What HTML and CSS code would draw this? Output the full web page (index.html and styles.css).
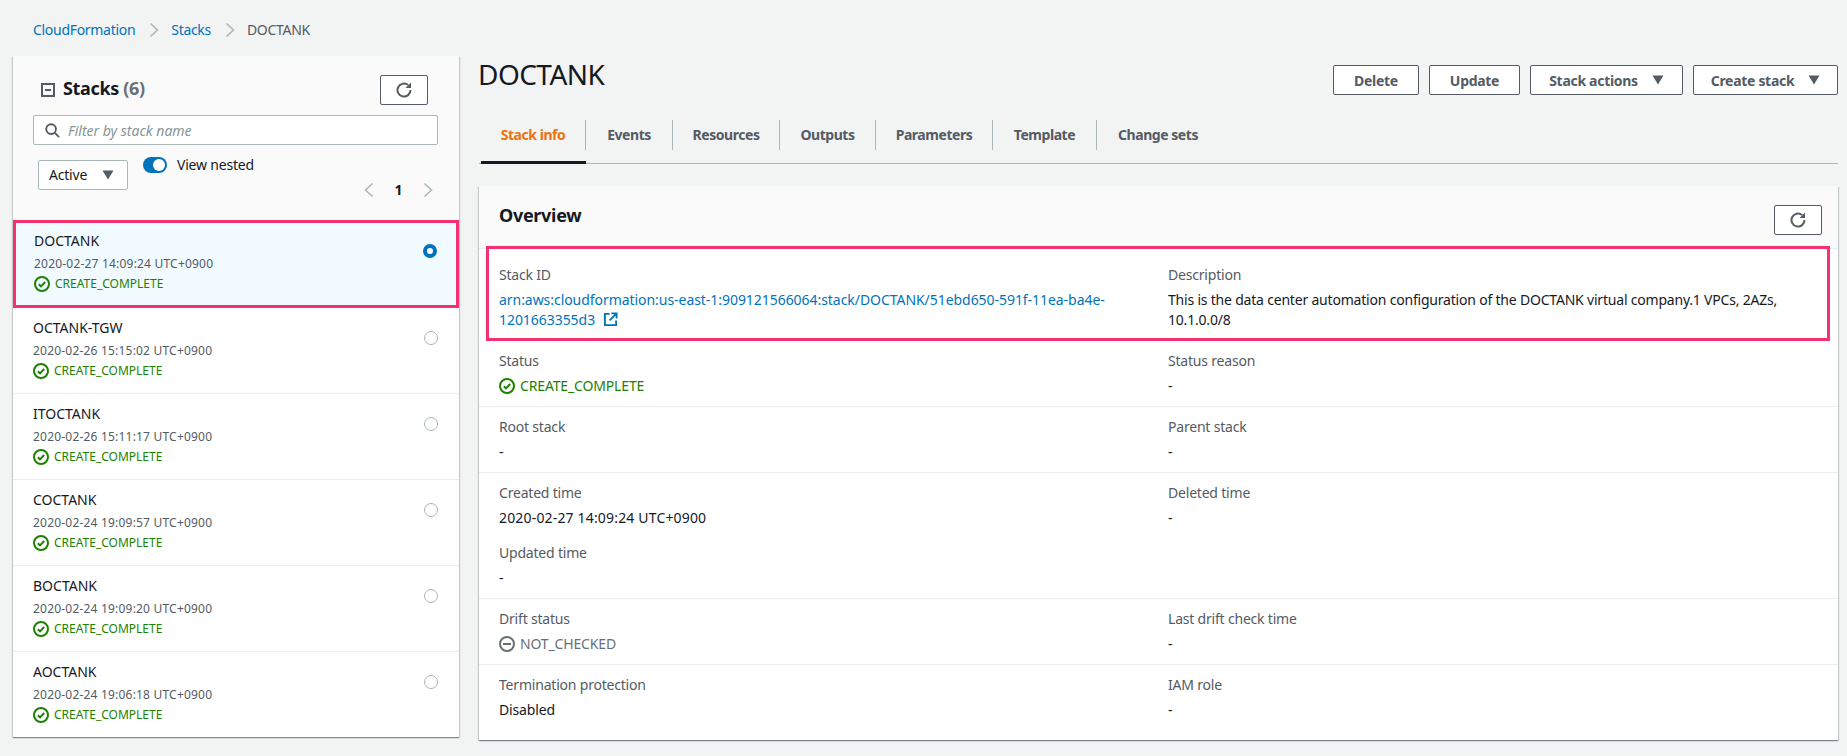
FILE: index.html
```html
<!DOCTYPE html>
<html lang="en">
<head>
<meta charset="utf-8">
<title>DOCTANK</title>
<link rel="stylesheet" href="styles.css">
</head>
<body>
<svg class="defs" width="0" height="0">
  <symbol id="refresh" viewBox="0 0 16 16"><path d="M14.5 8a6.5 6.5 0 1 1-2.4-5" fill="none" stroke="currentColor" stroke-width="2"/><path d="M15 0.5v5.5H9.5z" fill="currentColor"/></symbol>
  <symbol id="ok" viewBox="0 0 16 16"><circle cx="8" cy="8" r="7" fill="none" stroke="currentColor" stroke-width="2"/><path d="M4.8 8.2l2.2 2.2 4.2-4.4" fill="none" stroke="currentColor" stroke-width="2"/></symbol>
  <symbol id="minus" viewBox="0 0 16 16"><circle cx="8" cy="8" r="7" fill="none" stroke="currentColor" stroke-width="2"/><path d="M4 8h8" fill="none" stroke="currentColor" stroke-width="2"/></symbol>
  <symbol id="caret" viewBox="0 0 12 10"><path d="M0.5 0.5h11L6 9.5z" fill="currentColor"/></symbol>
</svg>

<nav class="crumbs">
  <a href="#">CloudFormation</a>
  <svg class="crumb-sep" viewBox="0 0 10 16"><path d="M1.5 1.5L8.5 8l-7 6.5" fill="none" stroke="currentColor" stroke-width="1.6"/></svg>
  <a href="#">Stacks</a>
  <svg class="crumb-sep" viewBox="0 0 10 16"><path d="M1.5 1.5L8.5 8l-7 6.5" fill="none" stroke="currentColor" stroke-width="1.6"/></svg>
  <span>DOCTANK</span>
</nav>

<div class="layout">
  <aside class="panel side">
    <div class="side-head">
      <div class="side-title">
        <svg class="collapse" viewBox="0 0 14 14"><rect x="1" y="1" width="12" height="12" fill="none" stroke="currentColor" stroke-width="2"/><path d="M4 7h6" stroke="currentColor" stroke-width="2"/></svg>
        <h2>Stacks <span class="count">(6)</span></h2>
        <button class="btn icon-btn"><svg class="ico16"><use href="#refresh"/></svg></button>
      </div>
      <div class="search">
        <svg class="search-ico" viewBox="0 0 16 16"><circle cx="6.5" cy="6.5" r="5.2" fill="none" stroke="currentColor" stroke-width="2"/><path d="M10.5 10.5L15 15" stroke="currentColor" stroke-width="2"/></svg>
        <span>Filter by stack name</span>
      </div>
      <div class="filters">
        <div class="select">Active <svg class="caret"><use href="#caret"/></svg></div>
        <span class="toggle"><i></i></span>
        <span class="toggle-label">View nested</span>
        <div class="pager">
          <svg class="chev" viewBox="0 0 10 16"><path d="M8.5 1.5L1.5 8l7 6.5" fill="none" stroke="currentColor" stroke-width="1.6"/></svg>
          <b>1</b>
          <svg class="chev" viewBox="0 0 10 16"><path d="M1.5 1.5L8.5 8l-7 6.5" fill="none" stroke="currentColor" stroke-width="1.6"/></svg>
        </div>
      </div>
    </div>
    <ul class="stacks">
      <li class="stack selected">
        <div><div class="name">DOCTANK</div><div class="date">2020-02-27 14:09:24 UTC+0900</div><div class="st"><svg class="ico16"><use href="#ok"/></svg>CREATE_COMPLETE</div></div>
        <span class="radio on"></span>
      </li>
      <li class="stack">
        <div><div class="name">OCTANK-TGW</div><div class="date">2020-02-26 15:15:02 UTC+0900</div><div class="st"><svg class="ico16"><use href="#ok"/></svg>CREATE_COMPLETE</div></div>
        <span class="radio"></span>
      </li>
      <li class="stack">
        <div><div class="name">ITOCTANK</div><div class="date">2020-02-26 15:11:17 UTC+0900</div><div class="st"><svg class="ico16"><use href="#ok"/></svg>CREATE_COMPLETE</div></div>
        <span class="radio"></span>
      </li>
      <li class="stack">
        <div><div class="name">COCTANK</div><div class="date">2020-02-24 19:09:57 UTC+0900</div><div class="st"><svg class="ico16"><use href="#ok"/></svg>CREATE_COMPLETE</div></div>
        <span class="radio"></span>
      </li>
      <li class="stack">
        <div><div class="name">BOCTANK</div><div class="date">2020-02-24 19:09:20 UTC+0900</div><div class="st"><svg class="ico16"><use href="#ok"/></svg>CREATE_COMPLETE</div></div>
        <span class="radio"></span>
      </li>
      <li class="stack">
        <div><div class="name">AOCTANK</div><div class="date">2020-02-24 19:06:18 UTC+0900</div><div class="st"><svg class="ico16"><use href="#ok"/></svg>CREATE_COMPLETE</div></div>
        <span class="radio"></span>
      </li>
    </ul>
  </aside>

  <main class="main">
    <header class="page-head">
      <h1>DOCTANK</h1>
      <div class="actions">
        <button class="btn act w-delete">Delete</button>
        <button class="btn act w-update">Update</button>
        <button class="btn act w-actions">Stack actions <svg class="caret"><use href="#caret"/></svg></button>
        <button class="btn act w-create">Create stack <svg class="caret"><use href="#caret"/></svg></button>
      </div>
    </header>
    <div class="tabs">
      <a class="tab active t1" href="#"><span>Stack info</span></a>
      <a class="tab t2" href="#"><span>Events</span></a>
      <a class="tab t3" href="#"><span>Resources</span></a>
      <a class="tab t4" href="#"><span>Outputs</span></a>
      <a class="tab t5" href="#"><span>Parameters</span></a>
      <a class="tab t6" href="#"><span>Template</span></a>
      <a class="tab t7 last" href="#"><span>Change sets</span></a>
    </div>
    <section class="panel overview">
      <div class="ov-head">
        <h2>Overview</h2>
        <button class="btn icon-btn"><svg class="ico16"><use href="#refresh"/></svg></button>
      </div>
      <div class="row row-mark">
        <div class="cell"><div class="lab">Stack ID</div><div class="val link-val"><a href="#">arn:aws:cloudformation:us-east-1:909121566064:stack/DOCTANK/51ebd650-591f-11ea-ba4e-<br>1201663355d3<svg class="ext" viewBox="0 0 16 16"><path d="M7 2H2v12h12V9" fill="none" stroke="currentColor" stroke-width="2"/><path d="M9 1.5h5.5V7M14 2L7 9" fill="none" stroke="currentColor" stroke-width="2"/></svg></a></div></div>
        <div class="cell"><div class="lab">Description</div><div class="val desc-val">This is the data center automation configuration of the DOCTANK virtual company.1 VPCs, 2AZs,<br>10.1.0.0/8</div></div>
      </div>
      <div class="row">
        <div class="cell"><div class="lab">Status</div><div class="val ok"><svg class="ico16"><use href="#ok"/></svg>CREATE_COMPLETE</div></div>
        <div class="cell"><div class="lab">Status reason</div><div class="val">-</div></div>
      </div>
      <div class="row">
        <div class="cell"><div class="lab">Root stack</div><div class="val">-</div></div>
        <div class="cell"><div class="lab">Parent stack</div><div class="val">-</div></div>
      </div>
      <div class="row">
        <div class="cell">
          <div class="lab">Created time</div><div class="val time-val">2020-02-27 14:09:24 UTC+0900</div>
          <div class="lab second">Updated time</div><div class="val">-</div>
        </div>
        <div class="cell"><div class="lab">Deleted time</div><div class="val">-</div></div>
      </div>
      <div class="row">
        <div class="cell"><div class="lab">Drift status</div><div class="val muted"><svg class="ico16"><use href="#minus"/></svg>NOT_CHECKED</div></div>
        <div class="cell"><div class="lab">Last drift check time</div><div class="val">-</div></div>
      </div>
      <div class="row no-line">
        <div class="cell"><div class="lab">Termination protection</div><div class="val">Disabled</div></div>
        <div class="cell"><div class="lab">IAM role</div><div class="val">-</div></div>
      </div>
    </section>
  </main>
</div>
</body>
</html>
```
FILE: styles.css
```css
* { box-sizing: border-box; }
html, body { margin: 0; padding: 0; }
body {
  background: #f2f3f3;
  color: #16191f;
  font-family: "Noto Sans", "Open Sans", sans-serif;
  font-size: 14px;
  line-height: 20px;
  height: 756px;
  overflow: hidden;
}
a { color: #0073bb; text-decoration: none; }
h1, h2 { margin: 0; }
ul { list-style: none; margin: 0; padding: 0; }
.defs { position: absolute; }
.ico16 { width: 16px; height: 16px; flex: none; display: block; }

.crumbs { height: 56px; padding: 20px 0 0 33px; display: flex; align-items: flex-start; color: #545b64; letter-spacing: -0.3px; }
.crumb-sep { width: 10px; height: 16px; margin: 2px 12px 0 14px; color: #aab7b8; }

.layout { display: grid; grid-template-columns: 446px 1359px; column-gap: 20px; margin-left: 13px; align-items: start; }
.panel { background: #fff; box-shadow: 0 1px 1px 0 rgba(0,28,36,.3), 1px 1px 1px 0 rgba(0,28,36,.15), -1px 1px 1px 0 rgba(0,28,36,.15); }

.side { height: 681px; }
.side-head { height: 164px; background: #fafafa; padding: 19px 20px 0 20px; }
.side-title { display: flex; align-items: flex-start; height: 30px; }
.collapse { width: 14px; height: 14px; margin: 8px 8px 0 8px; color: #545b64; }
.side-title h2 { font-size: 18px; line-height: 26px; font-weight: 700; letter-spacing: -0.35px; }
.count { color: #687078; }
.btn { background: #fff; border: 1px solid #545b64; border-radius: 2px; color: #545b64; font-family: inherit; padding: 0; cursor: pointer; }
.icon-btn { width: 48px; height: 30px; margin-left: auto; display: flex; align-items: center; justify-content: center; }
.side-title .icon-btn { margin-right: 11px; }
.search { margin-top: 10px; height: 30px; background: #fff; border: 1px solid #aab7b8; border-radius: 2px; display: flex; align-items: center; color: #879596; font-style: italic; padding-left: 11px; width: 405px; }
.search-ico { width: 15px; height: 15px; margin-right: 8px; color: #545b64; flex: none; }
.search span { position: relative; top: 1px; }
.filters { display: flex; align-items: flex-start; padding-top: 12px; height: 63px; }
.select { width: 90px; height: 30px; margin: 3px 0 0 5px; background: #fff; border: 1px solid #aab7b8; border-radius: 2px; display: flex; align-items: center; padding-left: 10px; letter-spacing: -0.2px; }
.select .caret { margin-left: auto; margin-right: 13px; color: #545b64; }
.caret { width: 12px; height: 10px; display: block; }
.toggle { width: 24px; height: 16px; border-radius: 8px; background: #0073bb; margin: 0 0 0 15px; position: relative; flex: none; }
.toggle i { position: absolute; right: 2px; top: 2px; width: 12px; height: 12px; border-radius: 50%; background: #fff; }
.toggle-label { margin-left: 10px; line-height: 16px; letter-spacing: -0.2px; }
.pager { margin-left: auto; margin-top: 23px; display: flex; align-items: center; height: 20px; margin-right: 6px; }
.pager b { width: 49px; text-align: center; font-weight: 700; font-size: 14px; }
.chev { width: 10px; height: 16px; color: #aab7b8; display: block; }

.stack { height: 86px; border-top: 1px solid #eaeded; padding: 10px 20px 0 20px; display: flex; justify-content: space-between; }
.stack.selected { background: #f1faff; border-top: 0; outline: 3px solid #f5316f; outline-offset: -3px; padding-left: 21px; padding-top: 11px; height: 88px; margin-bottom: -1px; position: relative; }
.name { font-size: 14px; line-height: 20px; }
.date { font-size: 12px; line-height: 16px; color: #545b64; margin-top: 5px; letter-spacing: 0.2px; }
.st { font-size: 12px; line-height: 16px; color: #1d8102; display: flex; align-items: center; gap: 5px; margin-top: 4px; }
.radio { width: 14px; height: 14px; border-radius: 50%; border: 1px solid #aab7b8; background: #fff; margin: 13px 1px 0 0; flex: none; }
.radio.on { border: 4px solid #0073bb; margin-top: 13px; margin-right: 2px; }

.main { min-width: 0; }
.page-head { display: flex; justify-content: space-between; align-items: flex-start; height: 64px; }
.page-head h1 { font-size: 28px; line-height: 36px; font-weight: 400; margin: 0 0 0 -1px; letter-spacing: -0.55px; }
.actions { display: flex; gap: 10px; margin-top: 9px; }
.act { height: 30px; font-weight: 700; font-size: 14px; letter-spacing: -0.3px; display: flex; align-items: center; justify-content: center; gap: 14px; }
.w-delete { width: 86px; }
.w-update { width: 91px; }
.w-actions { width: 153px; }
.w-create { width: 145px; }

.tabs { display: flex; height: 44px; border-bottom: 1px solid #aab7b8; align-items: flex-start; }
.tab { display: block; height: 44px; color: #545b64; font-weight: 700; letter-spacing: -0.45px; }
.tab span { display: flex; height: 30px; align-items: center; justify-content: center; border-right: 1px solid #aab7b8; }
.tab.last span { border-right: 0; }
.tab.active { color: #ec7211; border-bottom: 3px solid #16191f; margin-left: 2px; }
.t1 { width: 105px; }
.t2 { width: 87px; }
.t3 { width: 107px; }
.t4 { width: 96px; }
.t5 { width: 117px; }
.t6 { width: 104px; }
.t7 { width: 122px; }

.overview { margin-top: 22px; height: 554px; }
.ov-head { height: 63px; background: #fafafa; padding: 17px 16px 0 20px; display: flex; align-items: flex-start; border-bottom: 1px solid #eaeded; }
.ov-head .icon-btn { margin-top: 2px; }
.ov-head h2 { font-size: 18px; line-height: 24px; font-weight: 700; letter-spacing: -0.3px; }
.row { display: grid; grid-template-columns: 669px 1fr; padding: 10px 20px 10px 20px; border-bottom: 1px solid #eaeded; min-height: 66px; }
.row-mark { margin: -3px 8px 0 7px; padding: 16px 12px 0 10px; height: 95px; min-height: 0; border: 3px solid #f5316f; position: relative; }
.no-line { border-bottom: 0; }
.lab { color: #545b64; line-height: 20px; letter-spacing: -0.2px; }
.val { line-height: 20px; margin-top: 5px; display: flex; align-items: center; letter-spacing: -0.15px; }
.row-mark .val { display: block; }
.link-val { letter-spacing: -0.05px; }
.desc-val { letter-spacing: -0.2px; }
.time-val { letter-spacing: 0.17px; }
.val svg.ico16 { margin-right: 5px; }
.val.ok { color: #1d8102; }
.val.muted { color: #687078; }
.lab.second { margin-top: 15px; }
.ext { width: 15px; height: 15px; margin-left: 8px; vertical-align: -2px; }
```
